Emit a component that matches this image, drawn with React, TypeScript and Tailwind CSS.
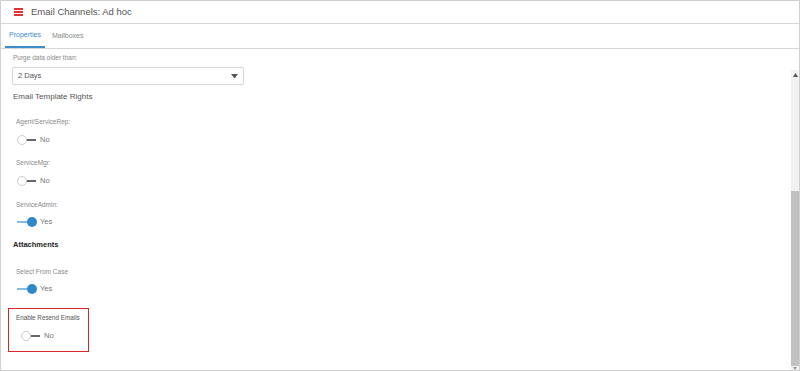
import React from 'react';

const Toggle: React.FC<{ on: boolean }> = ({ on }) => (
  <div className="flex items-center h-[12px]">
    <div className="relative w-[21px] h-[12px]">
      {on ? (
        <>
          <div className="absolute left-0 top-[5px] w-[13px] h-[2px] bg-[#86bbe3]"></div>
          <div className="absolute left-[10px] top-[1px] w-[10px] h-[10px] rounded-full bg-[#2f88ca]"></div>
        </>
      ) : (
        <>
          <div className="absolute left-[9px] top-[5px] w-[10px] h-[2px] bg-[#666]"></div>
          <div className="absolute left-0 top-[1px] w-[10px] h-[10px] rounded-full bg-white border border-[#cdcdcd]"></div>
        </>
      )}
    </div>
    <span className="ml-[2px] text-[7.5px] text-[#777]">{on ? 'Yes' : 'No'}</span>
  </div>
);

const FieldLabel: React.FC<{ text: string }> = ({ text }) => (
  <div className="h-[10px] flex items-center pl-[3px] text-[6.5px] text-[#888]">{text}</div>
);

const App: React.FC = () => {
  return (
    <div
      className="w-[800px] h-[371px] bg-white border border-[#cfcfcf] flex flex-col overflow-hidden"
      style={{ fontFamily: '"Liberation Sans", Arial, sans-serif' }}
    >
      {/* Header */}
      <div className="h-[23px] shrink-0 border-b border-[#d6d6d6] flex items-center pl-[13px]">
        <div className="flex flex-col gap-[1.5px] w-[9px]">
          <div className="h-[1.5px] bg-[#e03232]"></div>
          <div className="h-[1.5px] bg-[#e03232]"></div>
          <div className="h-[1.5px] bg-[#e03232]"></div>
        </div>
        <span className="ml-[8px] text-[9.5px] text-[#555]">Email Channels: Ad hoc</span>
      </div>

      {/* Tabs */}
      <div className="h-[25px] shrink-0 border-b border-[#d6d6d6] flex items-stretch pl-[4px]">
        <div className="px-[4px] flex items-center border-b-2 border-[#3b8ccb] text-[7px] text-[#3b8ccb] pt-[1px]">
          Properties
        </div>
        <div className="ml-[3px] px-[4px] flex items-center text-[7px] text-[#888]">Mailboxes</div>
      </div>

      {/* Body */}
      <div className="flex-1 flex min-h-0">
        <div className="flex-1 flex flex-col pl-[12px] pt-[4px]">
          <div className="h-[10px] flex items-center text-[6.5px] text-[#888]">Purge data older than:</div>
          <div className="mt-[4px] -ml-[1px] w-[232px] h-[18px] border border-[#d4d4d4] rounded-[2px] flex items-center justify-between pl-[5px] pr-[5px]">
            <span className="text-[7.5px] text-[#555]">2 Days</span>
            <svg width="7" height="5" viewBox="0 0 7 5"><polygon points="0,0 7,0 3.5,4.5" fill="#555" /></svg>
          </div>

          <div className="mt-[6px] h-[12px] flex items-center text-[8px] text-[#555]">Email Template Rights</div>

          <div className="mt-[14px]"><FieldLabel text="Agent/ServiceRep:" /></div>
          <div className="mt-[7px] pl-[4px]"><Toggle on={false} /></div>

          <div className="mt-[12px]"><FieldLabel text="ServiceMgr:" /></div>
          <div className="mt-[7px] pl-[4px]"><Toggle on={false} /></div>

          <div className="mt-[13px]"><FieldLabel text="ServiceAdmin:" /></div>
          <div className="mt-[6px] pl-[4px]"><Toggle on={true} /></div>

          <div className="mt-[11px] h-[12px] flex items-center text-[7.5px] font-bold text-[#222]">Attachments</div>

          <div className="mt-[16px]"><FieldLabel text="Select From Case" /></div>
          <div className="mt-[6px] pl-[4px]"><Toggle on={true} /></div>

          <div className="mt-[13px] -ml-[5px] w-[81px] h-[44px] border border-[#e02424] pl-[7px] pt-[4px]">
            <div className="h-[10px] flex items-center text-[6.3px] text-[#555]">Enable Resend Emails</div>
            <div className="mt-[7px] pl-[5px]"><Toggle on={false} /></div>
          </div>
        </div>

        {/* Scrollbar */}
        <div className="w-[8px] mt-[21px] bg-[#f1f1f1] flex flex-col">
          <div className="h-[10px] flex items-center justify-center">
            <svg width="5" height="4" viewBox="0 0 5 4"><polygon points="2.5,0 5,4 0,4" fill="#555" /></svg>
          </div>
          <div className="h-[111px]"></div>
          <div className="flex-1 bg-[#c1c1c1]"></div>
          <div className="h-[4px] flex items-center justify-center">
            <svg width="4" height="3" viewBox="0 0 4 3"><polygon points="0,0 4,0 2,3" fill="#999" /></svg>
          </div>
        </div>
      </div>
    </div>
  );
};

export default App;
